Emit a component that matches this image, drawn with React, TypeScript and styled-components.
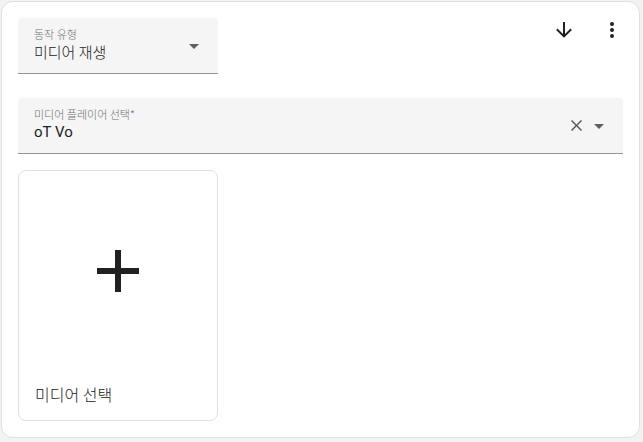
import React from "react";
import styled, { createGlobalStyle } from "styled-components";

const GlobalStyle = createGlobalStyle`
  html, body {
    margin: 0;
    padding: 0;
    background: #f2f2f2;
  }
  body {
    font-family: Roboto, "Noto Sans CJK KR", sans-serif;
    color: #212121;
  }
`;

const Page = styled.div`
  padding: 1px;
  width: 641px;
  box-sizing: border-box;
`;

const Card = styled.div`
  box-sizing: border-box;
  width: 639px;
  height: 437px;
  background: #ffffff;
  border: 1px solid #e0e0e0;
  border-radius: 12px;
  padding: 16px;
  display: flex;
  flex-direction: column;
`;

const HeaderRow = styled.div`
  display: flex;
  justify-content: space-between;
  align-items: flex-start;
`;

const IconGroup = styled.div`
  display: flex;
  margin-top: -12px;
  margin-right: -13px;
`;

const IconButton = styled.button`
  width: 48px;
  height: 48px;
  border: none;
  background: transparent;
  padding: 0;
  display: flex;
  align-items: center;
  justify-content: center;
  color: #212121;
  cursor: pointer;
`;

const Field = styled.div<{ $width?: string; $mt?: number }>`
  box-sizing: border-box;
  width: ${(p) => p.$width ?? "100%"};
  height: 56px;
  margin-top: ${(p) => p.$mt ?? 0}px;
  background: #f5f5f5;
  border-radius: 4px 4px 0 0;
  border-bottom: 1px solid #949494;
  display: flex;
  align-items: center;
  padding: 0 12px 0 16px;
`;

const FieldText = styled.div`
  flex: 1;
  display: flex;
  flex-direction: column;
  padding-bottom: 1px;
`;

const Label = styled.div`
  font-family: "Noto Sans CJK KR", Roboto, sans-serif;
  font-weight: 300;
  font-size: 11px;
  line-height: 14px;
  color: #707070;
`;

const Value = styled.div<{ $korean?: boolean }>`
  font-family: ${(p) =>
    p.$korean ? `"Noto Sans CJK KR", Roboto, sans-serif` : `Roboto, sans-serif`};
  font-weight: ${(p) => (p.$korean ? 300 : 400)};
  font-size: 15px;
  line-height: 22px;
  color: #212121;
`;

const Trailing = styled.div`
  display: flex;
  align-items: center;
  gap: 1px;
  color: #5f5f5f;
`;

const MediaCard = styled.div`
  box-sizing: border-box;
  width: 200px;
  margin-top: 16px;
  border: 1px solid #e0e0e0;
  border-radius: 8px;
  display: flex;
  flex-direction: column;
`;

const MediaThumb = styled.div`
  height: 199px;
  display: flex;
  align-items: center;
  justify-content: center;
  color: #212121;
`;

const MediaTitle = styled.div`
  padding: 12px 16px 14px;
  font-family: "Noto Sans CJK KR", Roboto, sans-serif;
  font-weight: 300;
  font-size: 16px;
  line-height: 24px;
  color: #212121;
`;

const Icon = ({ d, size = 24 }: { d: string; size?: number }) => (
  <svg width={size} height={size} viewBox="0 0 24 24" fill="currentColor">
    <path d={d} />
  </svg>
);

const ARROW_DOWN = "M11,4H13V16L18.5,10.5L19.92,11.92L12,19.84L4.08,11.92L5.5,10.5L11,16V4Z";
const DOTS = "M12,16A2,2 0 0,1 14,18A2,2 0 0,1 12,20A2,2 0 0,1 10,18A2,2 0 0,1 12,16M12,10A2,2 0 0,1 14,12A2,2 0 0,1 12,14A2,2 0 0,1 10,12A2,2 0 0,1 12,10M12,4A2,2 0 0,1 14,6A2,2 0 0,1 12,8A2,2 0 0,1 10,6A2,2 0 0,1 12,4Z";
const MENU_DOWN = "M7,10L12,15L17,10H7Z";
const CLOSE = "M19,6.41L17.59,5L12,10.59L6.41,5L5,6.41L10.59,12L5,17.59L6.41,19L12,13.41L17.59,19L19,17.59L13.41,12L19,6.41Z";
const PLUS = "M19,13H13V19H11V13H5V11H11V5H13V11H19V13Z";

export default function App() {
  return (
    <>
      <GlobalStyle />
      <Page>
        <Card>
          <HeaderRow>
            <Field $width="200px">
              <FieldText>
                <Label>동작 유형</Label>
                <Value $korean>미디어 재생</Value>
              </FieldText>
              <Trailing>
                <Icon d={MENU_DOWN} />
              </Trailing>
            </Field>
            <IconGroup>
              <IconButton>
                <Icon d={ARROW_DOWN} />
              </IconButton>
              <IconButton>
                <Icon d={DOTS} />
              </IconButton>
            </IconGroup>
          </HeaderRow>
          <Field $mt={24}>
            <FieldText>
              <Label>미디어 플레이어 선택*</Label>
              <Value>oT Vo</Value>
            </FieldText>
            <Trailing>
              <Icon d={CLOSE} size={19} />
              <Icon d={MENU_DOWN} />
            </Trailing>
          </Field>
          <MediaCard>
            <MediaThumb>
              <Icon d={PLUS} size={72} />
            </MediaThumb>
            <MediaTitle>미디어 선택</MediaTitle>
          </MediaCard>
        </Card>
      </Page>
    </>
  );
}
